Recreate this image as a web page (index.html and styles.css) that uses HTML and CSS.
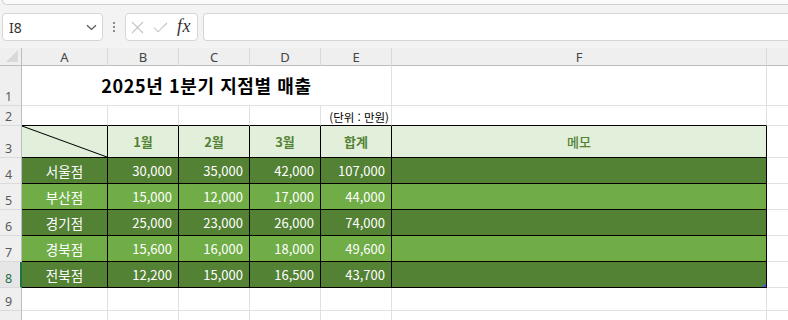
FILE: index.html
```html
<!DOCTYPE html>
<html lang="ko">
<head>
<meta charset="utf-8">
<link rel="stylesheet" href="styles.css">
</head>
<body>
<div class="ribbon-edge"></div>
<div class="fbar">
  <div class="namebox">
    <span class="ref">I8</span>
    <svg class="chev" width="11" height="7" viewBox="0 0 11 7"><path d="M1 1.2 L5.5 5.5 L10 1.2" fill="none" stroke="#555" stroke-width="1.2"/></svg>
  </div>
  <div class="vdots"><i></i><i></i><i></i></div>
  <div class="fbtns">
    <svg class="xic" width="13" height="13" viewBox="0 0 13 13"><path d="M1 1 L12 12 M12 1 L1 12" stroke="#c4c4c4" stroke-width="1.1" fill="none"/></svg>
    <svg class="ckic" width="15" height="11" viewBox="0 0 15 11"><path d="M1 5.5 L5 9.8 L14 1" stroke="#c4c4c4" stroke-width="1.1" fill="none"/></svg>
    <span class="fx">fx</span>
  </div>
  <div class="finput"></div>
</div>
<div class="sheet">
  <div class="corner"><svg width="12" height="12" viewBox="0 0 12 12"><path d="M12 0 L12 12 L0 12 Z" fill="#d9d9d9"/></svg></div>
  <div class="ch">A</div><div class="ch">B</div><div class="ch">C</div><div class="ch">D</div><div class="ch">E</div><div class="ch">F</div><div class="ch last"></div>

  <div class="rh">1</div>
  <div class="c title span5">2025년 1분기 지점별 매출</div>
  <div class="c"></div><div class="c g"></div>

  <div class="rh">2</div>
  <div class="c tt"></div><div class="c tt"></div><div class="c tt"></div><div class="c tt"></div>
  <div class="c tt unit">(단위 : 만원)</div>
  <div class="c tt"></div><div class="c g"></div>

  <div class="rh">3</div>
  <div class="c tb hd diagcell"><svg class="diag" viewBox="0 0 100 100" preserveAspectRatio="none"><line x1="0" y1="0" x2="100" y2="100" stroke="#000" stroke-width="1" vector-effect="non-scaling-stroke"/></svg></div>
  <div class="c tb hd">1월</div><div class="c tb hd">2월</div><div class="c tb hd">3월</div><div class="c tb hd">합계</div><div class="c tb hd memo">메모</div>
  <div class="c g"></div>

  <div class="rh">4</div>
  <div class="c tb dk name">서울점</div><div class="c tb dk num">30,000</div><div class="c tb dk num">35,000</div><div class="c tb dk num">42,000</div><div class="c tb dk num">107,000</div><div class="c tb dk"></div><div class="c g"></div>

  <div class="rh">5</div>
  <div class="c tb lt name">부산점</div><div class="c tb lt num">15,000</div><div class="c tb lt num">12,000</div><div class="c tb lt num">17,000</div><div class="c tb lt num">44,000</div><div class="c tb lt"></div><div class="c g"></div>

  <div class="rh">6</div>
  <div class="c tb dk name">경기점</div><div class="c tb dk num">25,000</div><div class="c tb dk num">23,000</div><div class="c tb dk num">26,000</div><div class="c tb dk num">74,000</div><div class="c tb dk"></div><div class="c g"></div>

  <div class="rh">7</div>
  <div class="c tb lt name">경북점</div><div class="c tb lt num">15,600</div><div class="c tb lt num">16,000</div><div class="c tb lt num">18,000</div><div class="c tb lt num">49,600</div><div class="c tb lt"></div><div class="c g"></div>

  <div class="rh sel">8</div>
  <div class="c tb dk name">전북점</div><div class="c tb dk num">12,200</div><div class="c tb dk num">15,000</div><div class="c tb dk num">16,500</div><div class="c tb dk num">43,700</div><div class="c tb dk handle-cell"><span class="handle"></span></div><div class="c g"></div>

  <div class="rh">9</div>
  <div class="c"></div><div class="c"></div><div class="c"></div><div class="c"></div><div class="c"></div><div class="c"></div><div class="c g"></div>

  <div class="rh"></div>
  <div class="c"></div><div class="c"></div><div class="c"></div><div class="c"></div><div class="c"></div><div class="c"></div><div class="c g"></div>
</div>
</body>
</html>
```
FILE: styles.css
```css
* { box-sizing: border-box; }
html, body { margin: 0; padding: 0; }
body {
  width: 788px;
  height: 320px;
  overflow: hidden;
  background: #f3f3f3;
  font-family: "Noto Sans", "Noto Sans CJK KR", sans-serif;
}
.ribbon-edge {
  height: 5px;
  margin-left: 2px;
  background: #fafafa;
  border-bottom: 1px solid #cfcfcf;
  border-left: 1px solid #cfcfcf;
  border-bottom-left-radius: 6px;
}
.fbar {
  display: flex;
  align-items: center;
  height: 28px;
  margin-top: 8px;
  padding-left: 2px;
}
.namebox {
  width: 101px;
  height: 28px;
  background: #fff;
  border: 1px solid #d6d6d6;
  border-radius: 4px;
  display: flex;
  align-items: center;
  justify-content: space-between;
  padding: 0 5px 0 6px;
}
.ref {
  font-family: "Noto Sans", sans-serif;
  font-size: 14px;
  color: #333;
}
.chev { margin-top: 1px; }
.vdots {
  width: 22px;
  display: flex;
  flex-direction: column;
  align-items: center;
  gap: 2px;
}
.vdots i {
  display: block;
  width: 2px;
  height: 2px;
  background: #8a8a8a;
}
.fbtns {
  width: 73px;
  height: 28px;
  background: #fff;
  border: 1px solid #d6d6d6;
  border-radius: 4px;
  display: flex;
  align-items: center;
  padding-left: 5px;
}
.xic { margin-right: 9px; }
.ckic { margin-right: 9px; margin-top: 1px; }
.fx {
  font-family: "Liberation Serif", "DejaVu Serif", serif;
  font-style: italic;
  font-size: 18px;
  color: #333;
  letter-spacing: 0.5px;
  margin-top: -2px;
}
.finput {
  flex: 1;
  margin-left: 5px;
  height: 28px;
  background: #fff;
  border: 1px solid #d6d6d6;
  border-right: none;
  border-radius: 4px 0 0 4px;
}

.sheet {
  margin-top: 7px;
  display: grid;
  grid-template-columns: 22px 86px 71px 71px 71px 71px 375px 1fr;
  grid-template-rows: 18px 40px 20px 32px 26px 26px 26px 26px 26px 23px 23px;
  background: #fff;
}
.corner {
  background: #efefef;
  border-right: 1px solid #bdbdbd;
  border-bottom: 1px solid #bdbdbd;
  display: flex;
  align-items: flex-end;
  justify-content: flex-end;
  padding: 0 3px 3px 0;
}
.ch {
  background: #efefef;
  border-right: 1px solid #dadada;
  border-bottom: 1px solid #bdbdbd;
  display: flex;
  align-items: center;
  justify-content: center;
  font-size: 13px;
  color: #444;
  line-height: 16px;
  padding-top: 1px;
}
.ch.last { border-right: none; }
.rh {
  background: #efefef;
  border-right: 1px solid #bdbdbd;
  border-bottom: 1px solid #dadada;
  display: flex;
  align-items: flex-end;
  padding: 0 0 1px 5px;
  font-size: 12.5px;
  line-height: 14px;
  color: #5a5a5a;
}
.rh.sel {
  color: #217346;
  border-right: 2px solid #217346;
  background: #e6e6e6;
}
.c {
  border-right: 1px solid #e1e1e1;
  border-bottom: 1px solid #e1e1e1;
  display: flex;
  align-items: center;
  font-family: "Noto Sans CJK KR", "Noto Sans", sans-serif;
  font-size: 13px;
  min-width: 0;
  white-space: nowrap;
}
.c.g { border-right: none; }
.span5 { grid-column: span 5; }
.title {
  justify-content: center;
  font-weight: 700;
  font-size: 18px;
  letter-spacing: 0.6px;
  color: #000;
  padding-bottom: 1px;
}
.tt { border-bottom-color: #000; }
.unit {
  justify-content: flex-end;
  font-size: 11.5px;
  color: #000;
  padding-right: 2px;
  padding-top: 2px;
}
.tb {
  border-right-color: #000;
  border-bottom-color: #000;
}
.hd {
  background: #e2efda;
  justify-content: center;
  color: #548235;
  font-weight: 700;
  font-size: 13px;
}
.hd.memo { font-weight: 500; }
.diagcell { padding: 0; }
.diag { display: block; width: 100%; height: 100%; }
.dk { background: #548235; color: #fff; }
.lt { background: #70ad47; color: #fff; }
.name { justify-content: center; font-size: 13.5px; }
.num { justify-content: flex-end; padding-right: 6px; }
.handle-cell { position: relative; }
.handle {
  position: absolute;
  right: 0;
  bottom: 0;
  width: 0;
  height: 0;
  border-left: 4px solid transparent;
  border-bottom: 4px solid #4b5fd0;
}
```
